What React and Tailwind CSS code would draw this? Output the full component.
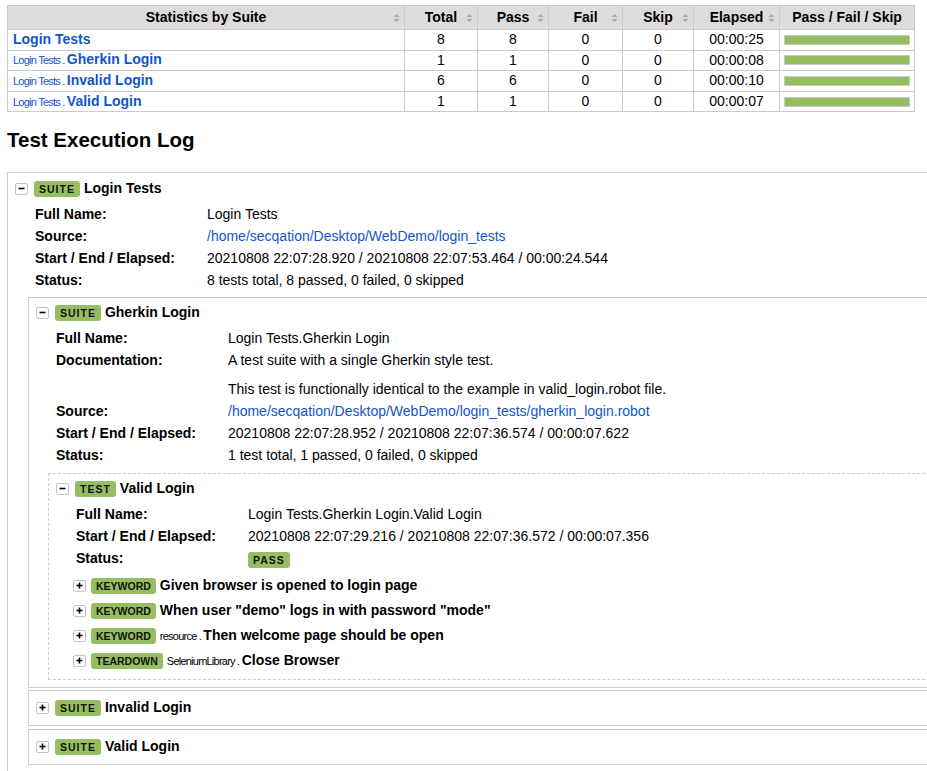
import React from 'react';

const LINK = 'text-[#1155cc]';

const SortIcon = () => (
  <svg width="7" height="9" viewBox="0 0 7 9" className="absolute right-[4px] top-1/2 -translate-y-1/2">
    <path d="M3.5 0.5 L6.5 3.6 H0.5 Z" fill="#a9a9a9" />
    <path d="M3.5 8.5 L6.5 5.4 H0.5 Z" fill="#a9a9a9" />
  </svg>
);

const Toggle = ({ open }) => (
  <span className="inline-flex w-[13px] h-[12px] shrink-0 items-center justify-center border border-[#c4c4c4] rounded-[2px] bg-white">
    <svg width="7" height="7" viewBox="0 0 7 7">
      <path d="M0.5 3.5 H6.5" stroke="#000" strokeWidth="1.6" />
      {!open && <path d="M3.5 0.5 V6.5" stroke="#000" strokeWidth="1.6" />}
    </svg>
  </span>
);

const Label = ({ children, plain }) => (
  <span
    className={`inline-block shrink-0 bg-[#97bd61] text-[#111] font-bold text-[10.5px] leading-[16px] h-[16px] px-[5px] rounded-[3px] ${
      plain ? 'tracking-normal' : 'tracking-[1px]'
    }`}
  >
    {children}
  </span>
);

const Parent = ({ children }) => (
  <span className="text-[11px] font-normal tracking-[-0.07em] whitespace-pre">{children}</span>
);

const Header = ({ open, label, children }) => (
  <div className="flex items-center h-[29px]">
    <Toggle open={open} />
    <span className="ml-[6px] flex items-center">
      <Label>{label}</Label>
    </span>
    <span className="ml-[4px] font-bold text-[14px]">{children}</span>
  </div>
);

const Meta = ({ rows }) => (
  <div className="ml-[20px] grid grid-cols-[172px_auto] text-[14px] leading-[22px]">
    {rows.map(([k, v], i) => (
      <React.Fragment key={i}>
        <div className="font-bold">{k}</div>
        <div>{v}</div>
      </React.Fragment>
    ))}
  </div>
);

const Keyword = ({ label, parent, name }) => (
  <div className="flex items-center h-[25px]">
    <Toggle open={false} />
    <span className="ml-[5px] flex items-center">
      <Label plain>{label}</Label>
    </span>
    <span className="ml-[4px] font-bold text-[14px] whitespace-nowrap">
      {parent && <Parent>{parent}</Parent>}
      {name}
    </span>
  </div>
);

const stats = [
  { parent: null, name: 'Login Tests', total: 8, pass: 8, elapsed: '00:00:25' },
  { parent: 'Login Tests . ', name: 'Gherkin Login', total: 1, pass: 1, elapsed: '00:00:08' },
  { parent: 'Login Tests . ', name: 'Invalid Login', total: 6, pass: 6, elapsed: '00:00:10' },
  { parent: 'Login Tests . ', name: 'Valid Login', total: 1, pass: 1, elapsed: '00:00:07' },
];

export default function App() {
  const th = 'relative border border-[#cbcbcb] font-bold text-center';
  const td = 'border border-[#cbcbcb] text-center p-0';

  return (
    <div className="h-[771px] overflow-hidden bg-white text-black font-['Liberation_Sans',Arial,sans-serif] pt-[5px] pl-[7px]">
      <table className="table-fixed border-collapse w-[907px] text-[14px] leading-[17px]">
        <colgroup>
          <col className="w-[397px]" />
          <col className="w-[73px]" />
          <col className="w-[71px]" />
          <col className="w-[74px]" />
          <col className="w-[71px]" />
          <col className="w-[86px]" />
          <col className="w-[135px]" />
        </colgroup>
        <thead>
          <tr className="h-[24px] bg-[#dcdcdc]">
            <th className={th}>Statistics by Suite<SortIcon /></th>
            <th className={th}>Total<SortIcon /></th>
            <th className={th}>Pass<SortIcon /></th>
            <th className={th}>Fail<SortIcon /></th>
            <th className={th}>Skip<SortIcon /></th>
            <th className={th}>Elapsed<SortIcon /></th>
            <th className={th}>Pass / Fail / Skip</th>
          </tr>
        </thead>
        <tbody>
          {stats.map((s, i) => (
            <tr key={i} className="h-[20.6px]">
              <td className="border border-[#cbcbcb] text-left p-0 pl-[5px] whitespace-nowrap">
                <span className={LINK}>
                  {s.parent && <Parent>{s.parent}</Parent>}
                  <span className="font-bold">{s.name}</span>
                </span>
              </td>
              <td className={td}>{s.total}</td>
              <td className={td}>{s.pass}</td>
              <td className={td}>0</td>
              <td className={td}>0</td>
              <td className={td}>{s.elapsed}</td>
              <td className="border border-[#cbcbcb] p-0 px-[4px]">
                <div className="h-[10px] border border-[#c8c8c8] bg-white">
                  <div className="h-full w-full bg-[#97bd61]" />
                </div>
              </td>
            </tr>
          ))}
        </tbody>
      </table>

      <h2 className="mt-[16px] mb-[20px] text-[20.5px] leading-[24px] font-bold">Test Execution Log</h2>

      <div className="w-[960px] border border-[#cccccc] pl-[7px] pt-[1px] pb-[60px]">
        <Header open label="SUITE">Login Tests</Header>
        <Meta
          rows={[
            ['Full Name:', 'Login Tests'],
            ['Source:', <span className={LINK}>/home/secqation/Desktop/WebDemo/login_tests</span>],
            ['Start / End / Elapsed:', '20210808 22:07:28.920 / 20210808 22:07:53.464 / 00:00:24.544'],
            ['Status:', '8 tests total, 8 passed, 0 failed, 0 skipped'],
          ]}
        />

        <div className="ml-[13px] mt-[6px]">
          <div className="border border-[#cccccc] pl-[7px] pb-[7px]">
            <Header open label="SUITE">Gherkin Login</Header>
            <div className="ml-[20px] grid grid-cols-[172px_auto] text-[14px] leading-[22px]">
              <div className="font-bold">Full Name:</div>
              <div>Login Tests.Gherkin Login</div>
              <div className="font-bold">Documentation:</div>
              <div>
                <div>A test suite with a single Gherkin style test.</div>
                <div className="mt-[7px]">This test is functionally identical to the example in valid_login.robot file.</div>
              </div>
              <div className="font-bold">Source:</div>
              <div className={LINK}>/home/secqation/Desktop/WebDemo/login_tests/gherkin_login.robot</div>
              <div className="font-bold">Start / End / Elapsed:</div>
              <div>20210808 22:07:28.952 / 20210808 22:07:36.574 / 00:00:07.622</div>
              <div className="font-bold">Status:</div>
              <div>1 test total, 1 passed, 0 failed, 0 skipped</div>
            </div>

            <div className="ml-[12px] mt-[7px] border border-dashed border-[#cccccc] pl-[7px] pb-[6px]">
              <Header open label="TEST">Valid Login</Header>
              <div className="ml-[20px] grid grid-cols-[172px_auto] text-[14px] leading-[22px]">
                <div className="font-bold">Full Name:</div>
                <div>Login Tests.Gherkin Login.Valid Login</div>
                <div className="font-bold">Start / End / Elapsed:</div>
                <div>20210808 22:07:29.216 / 20210808 22:07:36.572 / 00:00:07.356</div>
                <div className="font-bold">Status:</div>
                <div className="flex items-center h-[22px] pt-[4px]">
                  <Label>PASS</Label>
                </div>
              </div>
              <div className="ml-[17px] mt-[4px]">
                <Keyword label="KEYWORD" name="Given browser is opened to login page" />
                <Keyword label="KEYWORD" name={'When user "demo" logs in with password "mode"'} />
                <Keyword label="KEYWORD" parent="resource . " name="Then welcome page should be open" />
                <Keyword label="TEARDOWN" parent="SeleniumLibrary . " name="Close Browser" />
              </div>
            </div>
          </div>

          <div className="mt-[2px] border border-[#cccccc] pl-[7px] pt-[2px] pb-[3px]">
            <Header open={false} label="SUITE">Invalid Login</Header>
          </div>
          <div className="mt-[3px] border border-[#cccccc] pl-[7px] pt-[2px] pb-[3px]">
            <Header open={false} label="SUITE">Valid Login</Header>
          </div>
        </div>
      </div>
    </div>
  );
}
